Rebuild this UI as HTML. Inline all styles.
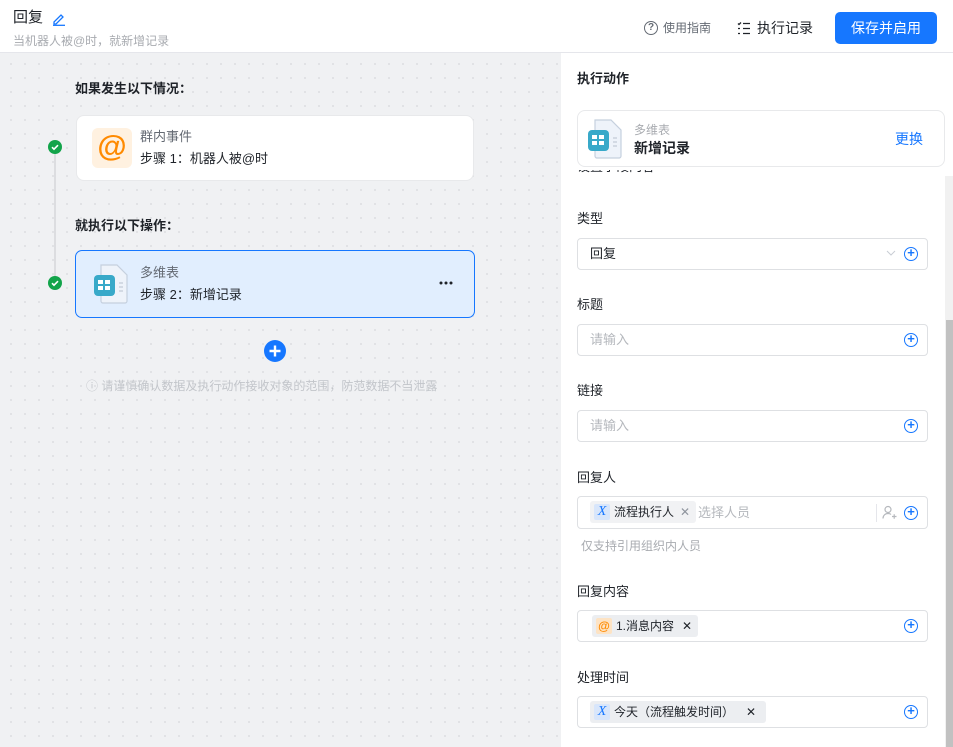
<!DOCTYPE html>
<html><head><meta charset="utf-8"><style>
*{box-sizing:border-box;margin:0;padding:0}
body{width:953px;height:747px;overflow:hidden;font-family:"Liberation Sans","Noto Sans CJK SC",sans-serif;font-size:13px;line-height:18px;color:#1f2329;background:#fff;position:relative}
.abs{position:absolute}
.hdr{left:0;top:0;width:953px;height:53px;background:#fff;border-bottom:1px solid #e5e6eb}
.canvas{left:0;top:53px;width:561px;height:694px;background-color:#f0f1f3;background-image:radial-gradient(#e0e1e4 1px,transparent 1.2px);background-size:14px 14px;background-position:4px 4px}
.card{background:#fff;border-radius:8px;border:1px solid #e8e9eb}
.chk{width:14px;height:14px;border-radius:50%;background:#12a44a}
.inp{left:577px;width:351px;height:32px;border:1px solid #dee0e3;border-radius:4px;background:#fff}
.lbl{left:577px;font-size:13px;color:#1f2329}
.plus{width:14px;height:14px;border:1.5px solid #1677ff;border-radius:50%;color:#1677ff;font-size:13px;line-height:10px;text-align:center;font-weight:bold}
.ph{color:#b5b8bd}
.tag{background:#eceef1;border-radius:3px;height:22px;display:flex;align-items:center;padding:0 6px 0 4px;font-size:12px}
.xi{width:16px;height:16px;background:#d8e6fb;color:#1677ff;font-style:italic;font-family:"Liberation Serif",serif;font-size:14px;text-align:center;line-height:16px;border-radius:2px;margin-right:4px}
</style></head><body>
<div class="abs hdr">
 <div class="abs" style="left:13px;top:9px;font-size:15px">回复</div>
 <svg class="abs" style="left:52px;top:12px" width="14" height="14" viewBox="0 0 14 14"><path d="M2 10 L9 3 L11 5 L4 12 L2 12Z" fill="none" stroke="#1677ff" stroke-width="1.3"/><path d="M1 13.3H13" stroke="#1677ff" stroke-width="1.3"/></svg>
 <div class="abs" style="left:13px;top:32px;font-size:12px;color:#a8abb0">当机器人被@时，就新增记录</div>
 <div class="abs" style="left:644px;top:21px;width:14px;height:14px;border:1.4px solid #646a73;border-radius:50%;font-size:10px;line-height:11px;text-align:center;color:#646a73;font-weight:bold">?</div>
 <div class="abs" style="left:663px;top:19px;font-size:12px;color:#646a73">使用指南</div>
 <svg class="abs" style="left:737px;top:21px" width="14" height="14" viewBox="0 0 14 14" stroke="#1f2329" stroke-width="1.3" fill="none"><path d="M1 2.5l1 1 2-2M1 7.5h2M1 12.5h2M6 2.5h7M6 7.5h7M6 12.5h7"/></svg>
 <div class="abs" style="left:757px;top:19px;font-size:14px">执行记录</div>
 <div class="abs" style="left:835px;top:12px;width:102px;height:32px;background:#1677ff;border-radius:5px;color:#fff;font-size:14px;text-align:center;line-height:32px">保存并启用</div>
</div>
<div class="abs canvas"></div>
<div class="abs" style="left:54px;top:147px;width:2px;height:136px;background:#dcdde0"></div>
<div class="abs" style="left:75px;top:80px;font-weight:bold;font-size:13px">如果发生以下情况：</div>
<div class="abs card" style="left:76px;top:115px;width:398px;height:66px"></div>
<svg class="abs" style="left:48px;top:140px" width="14" height="14" viewBox="0 0 14 14"><circle cx="7" cy="7" r="7" fill="#12a44a"/><path d="M4 7.2l2 2 4-4" stroke="#fff" stroke-width="1.6" fill="none"/></svg>
<div class="abs" style="left:92px;top:128px;width:40px;height:40px;background:#fff1e0;border-radius:6px;color:#ff8a00;font-size:30px;font-weight:bold;line-height:38px;text-align:center">@</div>
<div class="abs" style="left:140px;top:128px;color:#646a73">群内事件</div>
<div class="abs" style="left:140px;top:150px">步骤 1：机器人被@时</div>
<div class="abs" style="left:75px;top:217px;font-weight:bold">就执行以下操作：</div>
<div class="abs" style="left:75px;top:250px;width:400px;height:68px;background:#e1eefe;border:1px solid #1677ff;border-radius:7px"></div>
<svg class="abs" style="left:48px;top:276px" width="14" height="14" viewBox="0 0 14 14"><circle cx="7" cy="7" r="7" fill="#12a44a"/><path d="M4 7.2l2 2 4-4" stroke="#fff" stroke-width="1.6" fill="none"/></svg>
<svg class="abs" style="left:93px;top:263px" width="36" height="42" viewBox="0 0 36 42"><path d="M8 2H24L34 12V38a2 2 0 0 1-2 2H10a2 2 0 0 1-2-2Z" fill="#eef3fa" stroke="#c5d0de" stroke-width="1.2"/><path d="M26 20h4M26 24h4M26 28h4" stroke="#b8c2cf"/><rect x="1" y="12" width="21" height="21" rx="4" fill="#38a9c9"/><rect x="5" y="17" width="5" height="4" fill="#fff"/><rect x="12" y="17" width="5" height="4" fill="#fff"/><rect x="5" y="23" width="5" height="4" fill="#fff"/><rect x="12" y="23" width="5" height="4" fill="#fff"/></svg>
<div class="abs" style="left:140px;top:264px;color:#646a73">多维表</div>
<div class="abs" style="left:140px;top:286px">步骤 2：新增记录</div>
<svg class="abs" style="left:439px;top:281px" width="14" height="4"><circle cx="2" cy="2" r="1.5" fill="#1f2329"/><circle cx="7" cy="2" r="1.5" fill="#1f2329"/><circle cx="12" cy="2" r="1.5" fill="#1f2329"/></svg>
<svg class="abs" style="left:264px;top:340px" width="22" height="22"><circle cx="11" cy="11" r="11" fill="#1677ff"/><path d="M11 5.5v11M5.5 11h11" stroke="#fff" stroke-width="2.4"/></svg>
<div class="abs" style="left:86px;top:377px;font-size:12px;color:#c2c5ca">ⓘ 请谨慎确认数据及执行动作接收对象的范围，防范数据不当泄露</div>

<div class="abs" style="left:561px;top:53px;width:392px;height:694px;background:#fff"></div>
<div class="abs" style="left:577px;top:70px;font-weight:bold">执行动作</div>
<div class="abs" style="left:577px;top:170px;font-size:13px;height:12px;overflow:hidden;line-height:0px;color:#1f2329;padding-top:0"><span style="position:relative;top:-3px">设置字段内容</span></div>
<div class="abs card" style="left:577px;top:110px;width:368px;height:57px;background:#fff"></div>
<svg class="abs" style="left:587px;top:118px" width="36" height="42" viewBox="0 0 36 42"><path d="M8 2H24L34 12V38a2 2 0 0 1-2 2H10a2 2 0 0 1-2-2Z" fill="#eef3fa" stroke="#c5d0de" stroke-width="1.2"/><path d="M26 20h4M26 24h4M26 28h4" stroke="#b8c2cf"/><rect x="1" y="12" width="21" height="21" rx="4" fill="#38a9c9"/><rect x="5" y="17" width="5" height="4" fill="#fff"/><rect x="12" y="17" width="5" height="4" fill="#fff"/><rect x="5" y="23" width="5" height="4" fill="#fff"/><rect x="12" y="23" width="5" height="4" fill="#fff"/></svg>
<div class="abs" style="left:634px;top:121px;font-size:12px;color:#a8abb0">多维表</div>
<div class="abs" style="left:634px;top:139px;font-weight:bold;font-size:14px">新增记录</div>
<div class="abs" style="left:895px;top:130px;color:#1677ff;font-size:14px">更换</div>
<div class="abs" style="left:945px;top:176px;width:8px;height:571px;background:#f1f1f1"></div>
<div class="abs" style="left:946px;top:320px;width:7px;height:427px;background:#c1c1c1"></div>

<div class="abs lbl" style="top:210px">类型</div>
<div class="abs inp" style="top:238px"><span class="abs" style="left:12px;top:6px">回复</span><svg class="abs" style="left:308px;top:11px" width="10" height="6"><path d="M1 1l4 4 4-4" stroke="#c9cdd4" fill="none"/></svg><div class="abs plus" style="left:326px;top:8px">+</div></div>
<div class="abs lbl" style="top:296px">标题</div>
<div class="abs inp" style="top:324px"><span class="abs ph" style="left:12px;top:6px">请输入</span><div class="abs plus" style="left:326px;top:8px">+</div></div>
<div class="abs lbl" style="top:382px">链接</div>
<div class="abs inp" style="top:410px"><span class="abs ph" style="left:12px;top:6px">请输入</span><div class="abs plus" style="left:326px;top:8px">+</div></div>
<div class="abs lbl" style="top:469px">回复人</div>
<div class="abs inp" style="top:496px;height:33px"><div class="abs tag" style="left:12px;top:4px;background:#f1f2f4"><span class="xi">X</span>流程执行人<span style="color:#8f959e;margin-left:6px">✕</span></div><span class="abs ph" style="left:120px;top:7px">选择人员</span><div class="abs" style="left:298px;top:7px;width:1px;height:18px;background:#e5e6eb"></div><svg class="abs" style="left:304px;top:8px" width="15" height="15" viewBox="0 0 15 15" fill="none" stroke="#b5b8bd" stroke-width="1.2"><circle cx="6" cy="4.5" r="3"/><path d="M1 13.5c0-3 2.2-5 5-5 1.5 0 2.5.5 3 1M10 11.5h4.5M12.2 9.3v4.5"/></svg><div class="abs plus" style="left:326px;top:9px">+</div></div>
<div class="abs" style="left:581px;top:537px;font-size:12px;color:#a8abb0">仅支持引用组织内人员</div>
<div class="abs lbl" style="top:583px">回复内容</div>
<div class="abs inp" style="top:610px"><div class="abs tag" style="left:14px;top:4px"><span style="width:16px;height:16px;background:#fde3c4;color:#ff8a00;font-weight:bold;text-align:center;line-height:16px;border-radius:2px;margin-right:4px">@</span>1.消息内容<span style="margin-left:8px">✕</span></div><div class="abs plus" style="left:326px;top:8px">+</div></div>
<div class="abs lbl" style="top:669px">处理时间</div>
<div class="abs inp" style="top:696px"><div class="abs tag" style="left:12px;top:4px;padding-right:10px"><span class="xi">X</span>今天（流程触发时间）<span style="margin-left:12px">✕</span></div><div class="abs plus" style="left:326px;top:8px">+</div></div>
</body></html>
